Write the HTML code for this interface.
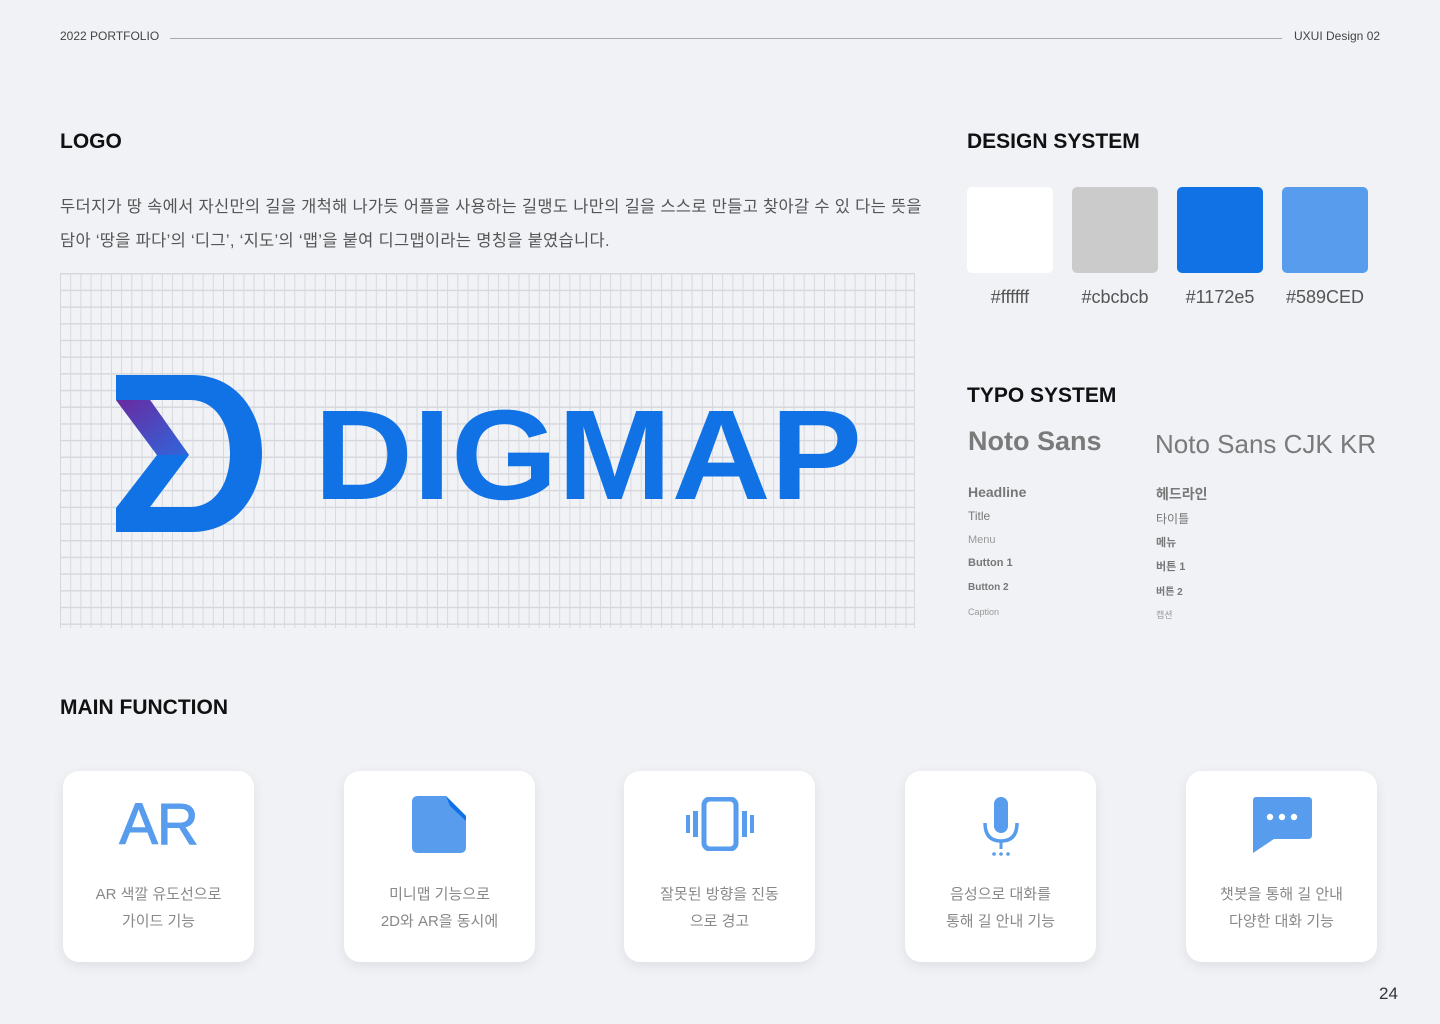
<!DOCTYPE html>
<html><head><meta charset="utf-8"><style>
*{margin:0;padding:0;box-sizing:border-box}
body{width:1440px;height:1024px;background:#f0f2f6;font-family:"Liberation Sans","Noto Sans CJK KR",sans-serif;position:relative;overflow:hidden;color:#111}
.a{position:absolute}
h2{position:absolute;font-size:21px;font-weight:700;color:#111;letter-spacing:0}
.grid{left:60px;top:273px;width:855px;height:355px;background-image:linear-gradient(to right,#d6d8de 1px,transparent 1px),linear-gradient(to bottom,#d6d8de 1.5px,transparent 1.5px);background-size:10.2px 100%,100% 16.7px;border-right:1px solid #d6d8de}
.sw{position:absolute;top:187px;width:86px;height:86px;border-radius:5px}
.swl{position:absolute;top:287px;font-size:18px;color:#555;width:110px;text-align:center}
.card{position:absolute;top:771px;width:191px;height:191px;background:#fff;border-radius:16px;box-shadow:0 4px 12px rgba(0,0,0,.08)}
.card p{position:absolute;top:110px;left:0;right:0;text-align:center;font-size:15px;line-height:27px;color:#888}
.ic{position:absolute;left:50%;transform:translateX(-50%);top:22px}
.t{position:absolute;color:#777}
</style></head><body>
<div class="a" style="left:60px;top:29px;font-size:12px;color:#444">2022 PORTFOLIO</div>
<div class="a" style="left:170px;top:38px;width:1112px;height:1px;background:#aaa"></div>
<div class="a" style="left:1294px;top:29px;font-size:12px;color:#444">UXUI Design 02</div>

<h2 style="left:60px;top:130px">LOGO</h2>
<div class="a" style="left:60px;top:190px;font-size:16.5px;line-height:34px;color:#555;width:900px;letter-spacing:0.3px">두더지가 땅 속에서 자신만의 길을 개척해 나가듯 어플을 사용하는 길맹도 나만의 길을 스스로 만들고 찾아갈 수 있 다는 뜻을<br>담아 ‘땅을 파다’의 ‘디그’, ‘지도’의 ‘맵’을 붙여 디그맵이라는 명칭을 붙였습니다.</div>
<div class="a grid"></div>
<svg class="a" style="left:0;top:0" width="920" height="640">
<defs><linearGradient id="g" x1="0" y1="0" x2="1" y2="1"><stop offset="0" stop-color="#6a2aa0"/><stop offset="1" stop-color="#2f66dc"/></linearGradient></defs>
<path fill-rule="evenodd" d="M116 375 H192 C236 375 262 412 262 453 C262 495 236 532 192 532 H116 V508 L157 455 L116 400 Z M150 400 H190 C216 400 230 425 230 453 C230 482 216 507 190 507 H150 L189 455 Z" fill="#1172e5"/>
<path d="M116 400 H150 L189 455 H157 Z" fill="url(#g)"/>
<text x="314" y="499" font-family="Liberation Sans" font-weight="700" font-size="128" fill="#1172e5" textLength="548" lengthAdjust="spacingAndGlyphs">DIGMAP</text>
</svg>

<h2 style="left:967px;top:130px">DESIGN SYSTEM</h2>
<div class="sw" style="left:967px;background:#fff"></div>
<div class="sw" style="left:1072px;background:#cbcbcb"></div>
<div class="sw" style="left:1177px;background:#1172e5"></div>
<div class="sw" style="left:1282px;background:#589ced"></div>
<div class="swl" style="left:955px">#ffffff</div>
<div class="swl" style="left:1060px">#cbcbcb</div>
<div class="swl" style="left:1165px">#1172e5</div>
<div class="swl" style="left:1270px">#589CED</div>

<h2 style="left:967px;top:384px">TYPO SYSTEM</h2>
<div class="t" style="left:968px;top:426px;font-size:27px;font-weight:700;color:#7a7a7a">Noto Sans</div>
<div class="t" style="left:1155px;top:429px;font-size:26px;color:#7a7a7a">Noto Sans CJK KR</div>
<div class="t" style="left:968px;top:484px;font-size:14px;font-weight:700">Headline</div>
<div class="t" style="left:968px;top:509px;font-size:12px">Title</div>
<div class="t" style="left:968px;top:534px;font-size:11px;color:#999">Menu</div>
<div class="t" style="left:968px;top:557px;font-size:11px;font-weight:700">Button 1</div>
<div class="t" style="left:968px;top:582px;font-size:10px;font-weight:700">Button 2</div>
<div class="t" style="left:968px;top:607px;font-size:9px;color:#999">Caption</div>
<div class="t" style="left:1156px;top:484px;font-size:14px;font-weight:700">헤드라인</div>
<div class="t" style="left:1156px;top:510px;font-size:12px">타이틀</div>
<div class="t" style="left:1156px;top:534px;font-size:11px;font-weight:700">메뉴</div>
<div class="t" style="left:1156px;top:558px;font-size:11px;font-weight:700">버튼 1</div>
<div class="t" style="left:1156px;top:583px;font-size:10px;font-weight:700">버튼 2</div>
<div class="t" style="left:1156px;top:608px;font-size:9px;color:#999">캡션</div>

<h2 style="left:60px;top:696px">MAIN FUNCTION</h2>

<div class="card" style="left:63px"><div class="ic" style="top:20px;font-size:58px;color:#589ced;letter-spacing:-1px;-webkit-text-stroke:1px #589ced">AR</div><p>AR 색깔 유도선으로<br>가이드 기능</p></div>
<div class="card" style="left:344px"><svg class="ic" style="top:25px" width="60" height="60" viewBox="0 0 60 60"><path d="M8 0 H36 L56 20 V51 Q56 57 50 57 H8 Q2 57 2 51 V6 Q2 0 8 0Z" fill="#589ced"/><path d="M36 0 L56 20 V25 L40 10 Z" fill="#1172e5"/></svg><p>미니맵 기능으로<br>2D와 AR을 동시에</p></div>
<div class="card" style="left:624px"><svg class="ic" style="top:26px" width="70" height="54" viewBox="0 0 70 54"><rect x="19" y="2" width="32" height="50" rx="6" fill="none" stroke="#589ced" stroke-width="5"/><rect x="8" y="14" width="5" height="26" fill="#589ced"/><rect x="1" y="18" width="4" height="18" fill="#589ced"/><rect x="57" y="14" width="5" height="26" fill="#589ced"/><rect x="65" y="18" width="4" height="18" fill="#589ced"/></svg><p>잘못된 방향을 진동<br>으로 경고</p></div>
<div class="card" style="left:905px"><svg class="ic" style="top:26px" width="40" height="60" viewBox="0 0 40 60"><rect x="13" y="0" width="14" height="36" rx="7" fill="#589ced"/><path d="M4 26 Q4 44 20 44 Q36 44 36 26" fill="none" stroke="#589ced" stroke-width="3.5"/><rect x="18.5" y="44" width="3" height="8" fill="#589ced"/><circle cx="13" cy="57" r="1.8" fill="#589ced"/><circle cx="20" cy="57" r="1.8" fill="#589ced"/><circle cx="27" cy="57" r="1.8" fill="#589ced"/></svg><p>음성으로 대화를<br>통해 길 안내 기능</p></div>
<div class="card" style="left:1186px"><svg class="ic" style="top:26px" width="60" height="56" viewBox="0 0 60 56"><path d="M4 0 H56 Q60 0 60 4 V38 Q60 42 56 42 H22 L1 56 V4 Q1 0 4 0Z" fill="#589ced"/><circle cx="18" cy="20" r="3.2" fill="#fff"/><circle cx="30" cy="20" r="3.2" fill="#fff"/><circle cx="42" cy="20" r="3.2" fill="#fff"/></svg><p>챗봇을 통해 길 안내<br>다양한 대화 기능</p></div>

<div class="a" style="left:1379px;top:984px;font-size:17px;color:#333">24</div>
</body></html>
